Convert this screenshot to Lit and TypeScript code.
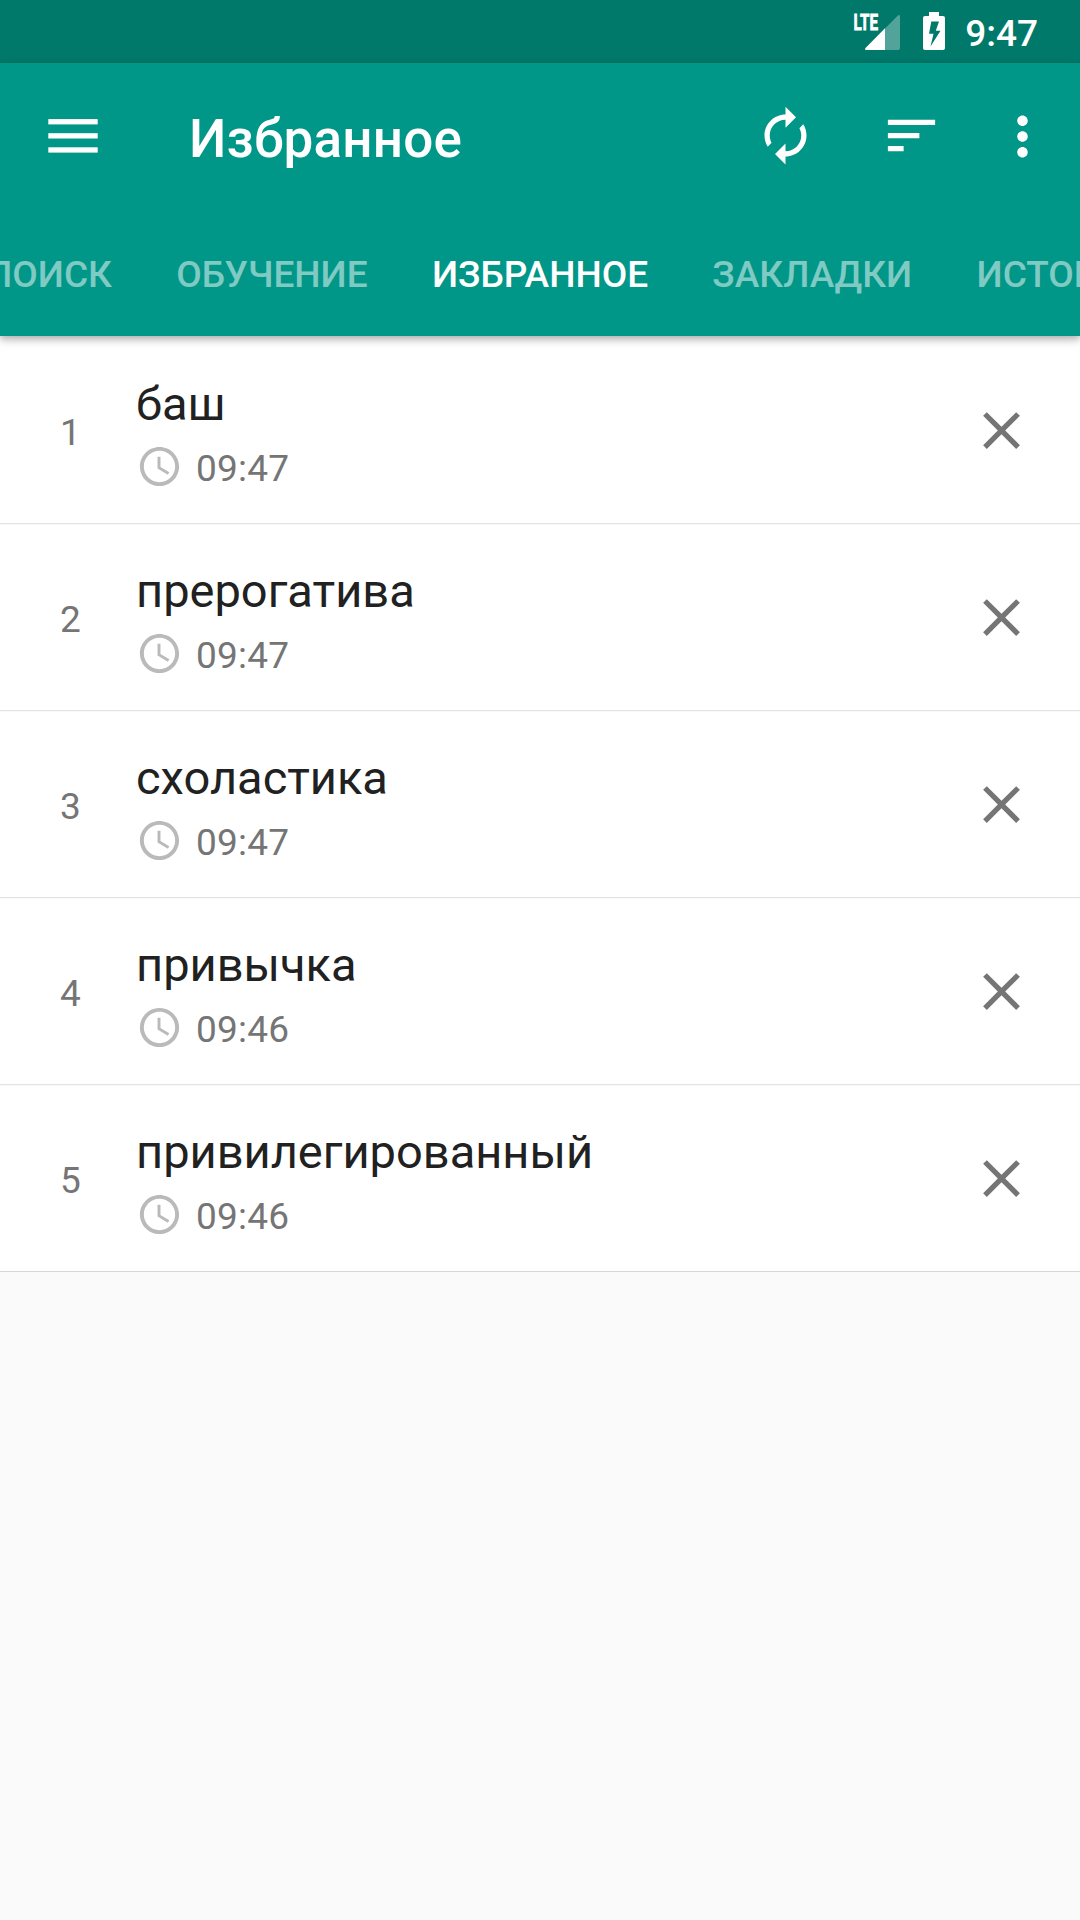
import { LitElement, html, css, svg } from "lit";
import { customElement, property } from "lit/decorators.js";
import { classMap } from "lit/directives/class-map.js";

const ICONS: Record<string, string> = {
  sync: "M12 6v3l4-4-4-4v3c-4.42 0-8 3.58-8 8 0 1.57.46 3.03 1.24 4.26L6.7 14.8c-.45-.83-.7-1.79-.7-2.8 0-3.31 2.69-6 6-6zm6.76 1.74L17.3 9.2c.44.84.7 1.79.7 2.8 0 3.31-2.69 6-6 6v-3l-4 4 4 4v-3c4.42 0 8-3.58 8-8 0-1.57-.46-3.03-1.24-4.26z",
  sort: "M3 18h6v-2H3v2zM3 6v2h18V6H3zm0 7h12v-2H3v2z",
  more: "M12 8c1.1 0 2-.9 2-2s-.9-2-2-2-2 .9-2 2 .9 2 2 2zm0 2c-1.1 0-2 .9-2 2s.9 2 2 2 2-.9 2-2-.9-2-2-2zm0 6c-1.1 0-2 .9-2 2s.9 2 2 2 2-.9 2-2-.9-2-2-2z",
  close: "M19 6.41L17.59 5 12 10.59 6.41 5 5 6.41 10.59 12 5 17.59 6.41 19 12 13.41 17.59 19 19 17.59 13.41 12z",
  clock: "M11.99 2C6.47 2 2 6.48 2 12s4.47 10 9.99 10C17.52 22 22 17.52 22 12S17.52 2 11.99 2zM12 20c-4.42 0-8-3.58-8-8s3.58-8 8-8 8 3.58 8 8-3.58 8-8 8zm.5-13H11v6l5.25 3.15.75-1.23-4.5-2.67z",
};

@customElement("md-icon")
class MdIcon extends LitElement {
  static styles = css`
    :host { display: block; width: 63px; height: 63px; flex: none; }
    .glyph { display: block; width: 100%; height: 100%; fill: currentColor; }
  `;
  @property() name = "";
  render() {
    return html`<svg class="glyph" viewBox="0 0 24 24">${svg`<path d=${ICONS[this.name]} />`}</svg>`;
  }
}

@customElement("status-bar")
class StatusBar extends LitElement {
  static styles = css`
    :host { display: flex; align-items: flex-start; justify-content: flex-end; height: 63px; background: #00796b; color: #fff; padding-right: 42px; box-sizing: border-box; }
    .icons { display: block; width: 110px; height: 63px; margin-right: 10px; }
    .lte { font: 700 22.5px/1 Roboto, sans-serif; fill: #fff; stroke: #fff; stroke-width: 0.8px; }
    .clock { font: 500 37px/67px Roboto, sans-serif; }
  `;
  render() {
    return html`
      <svg class="icons" viewBox="845 0 110 63">
        <path d="M898.200 15.200q1.800-1 1.800 1.200V48q0 2-2 2H867q-3 0-1.400-2z" fill="#fff" fill-opacity=".32" />
        <path d="M885 28.200V50H867q-3 0-1.400-2z" fill="#fff" />
        <text class="lte" x="853.500" y="29.700" textLength="24.500" lengthAdjust="spacingAndGlyphs">LTE</text>
        <path fill="#fff" fill-rule="evenodd" d="M929 12h10v4h4q2 0 2 2V48q0 2-2 2H925q-2 0-2-2V18q0-2 2-2h4zM931.300 21.500L929 33.700h4.500L930.500 46.500L940.500 30.700h-4.700L939 21.500z" />
      </svg>
      <span class="clock">9:47</span>
    `;
  }
}

@customElement("app-toolbar")
class AppToolbar extends LitElement {
  static styles = css`
    :host { display: flex; align-items: center; height: 147px; padding: 0 26px 0 48px; box-sizing: border-box; color: #fff; }
    .menu { display: block; width: 50px; height: 36px; margin-top: -1px; }
    .title { flex: 1; margin: 0 0 0 91px; padding-top: 4px; font: 500 53px/60px Roboto, sans-serif; letter-spacing: 0.2px; }
    .actions { display: flex; gap: 63px; margin-top: -2px; }
    .overflow { margin: 1px 0 -1px -15px; }
  `;
  @property() heading = "";
  render() {
    return html`
      <svg class="menu" viewBox="0 0 50 36" fill="#fff">
        <rect x=".3" y="1.100" width="49.400" height="5.300" />
        <rect x=".3" y="15.200" width="49.400" height="5.300" />
        <rect x=".3" y="29.300" width="49.400" height="5.300" />
      </svg>
      <h1 class="title">${this.heading}</h1>
      <div class="actions">
        <md-icon name="sync"></md-icon>
        <md-icon name="sort"></md-icon>
        <md-icon class="overflow" name="more"></md-icon>
      </div>
    `;
  }
}

@customElement("tab-strip")
class TabStrip extends LitElement {
  static styles = css`
    :host { display: flex; height: 126px; overflow: hidden; }
    .track { display: flex; flex: none; margin-left: -14px; gap: 64.3px; }
    .tab { font: 500 37px/129px Roboto, sans-serif; color: rgba(255, 255, 255, 0.5); white-space: nowrap; }
    .active { color: #fff; }
  `;
  @property({ attribute: false }) tabs: string[] = [];
  @property() selected = "";
  render() {
    return html`<div class="track">
      ${this.tabs.map((t) => html`<span class=${classMap({ tab: true, active: t === this.selected })}>${t}</span>`)}
    </div>`;
  }
}

@customElement("word-row")
class WordRow extends LitElement {
  static styles = css`
    :host { display: flex; align-items: center; height: 187px; box-sizing: border-box; background: #fff; border-bottom: 1px solid #e3e3e3; padding-right: 47px; font-family: Roboto, sans-serif; }
    :host(:not(:first-child)) { box-shadow: inset 0 1px #f9f9f9; }
    :host(:last-child) { border-bottom-color: #d6d6d6; }
    .index { width: 136px; padding: 6px 0 0 60px; box-sizing: border-box; font-size: 37px; line-height: 44px; color: #757575; }
    .body { flex: 1; display: flex; flex-direction: column; gap: 11px; padding-top: 6px; }
    .word { font-size: 47px; line-height: 56px; color: #212121; }
    .meta { display: flex; align-items: center; gap: 13px; height: 47px; }
    .clock { width: 47px; height: 47px; color: #bababa; }
    .time { font-size: 37px; line-height: 44px; letter-spacing: 0.2px; padding-top: 5px; color: #757575; }
    .remove { color: #757575; }
  `;
  @property({ type: Number }) index = 0;
  @property() word = "";
  @property() time = "";
  render() {
    return html`
      <span class="index">${this.index}</span>
      <div class="body">
        <div class="word">${this.word}</div>
        <div class="meta"><md-icon class="clock" name="clock"></md-icon><span class="time">${this.time}</span></div>
      </div>
      <md-icon class="remove" name="close"></md-icon>
    `;
  }
}

@customElement("app-root")
class AppRoot extends LitElement {
  static styles = css`
    :host { display: flex; flex-direction: column; width: 1080px; height: 1920px; overflow: hidden; background: #fafafa; }
    .bar { position: relative; z-index: 1; background: #009688; box-shadow: 0 3px 7px rgba(0, 0, 0, 0.25), 0 4px 12px rgba(0, 0, 0, 0.1); }
    .list { display: flex; flex-direction: column; padding-top: 1px; background: #fff; }
  `;
  private words = [
    ["баш", "09:47"],
    ["прерогатива", "09:47"],
    ["схоластика", "09:47"],
    ["привычка", "09:46"],
    ["привилегированный", "09:46"],
  ];
  render() {
    return html`
      <status-bar></status-bar>
      <header class="bar">
        <app-toolbar heading="Избранное"></app-toolbar>
        <tab-strip .tabs=${["ПОИСК", "ОБУЧЕНИЕ", "ИЗБРАННОЕ", "ЗАКЛАДКИ", "ИСТОРИЯ"]} selected="ИЗБРАННОЕ"></tab-strip>
      </header>
      <main class="list">
        ${this.words.map(([w, t], i) => html`<word-row .index=${i + 1} .word=${w} .time=${t}></word-row>`)}
      </main>
    `;
  }
}
